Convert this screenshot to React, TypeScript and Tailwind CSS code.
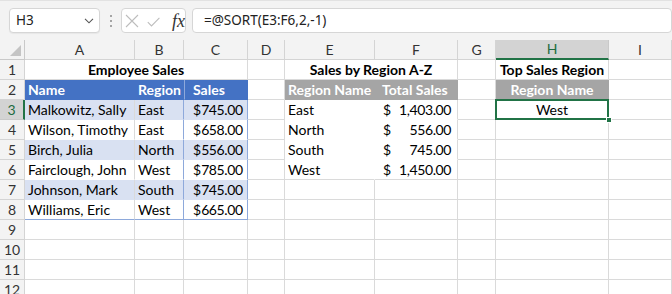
import type { ReactNode } from 'react'

const cols = ['A', 'B', 'C', 'D', 'E', 'F', 'G', 'H', 'I']

type Cell = {
  span?: number
  text?: ReactNode
  cls?: string
}

const grid = 'border-r border-b border-[#dadada]'
const blueHead = 'bg-[#4472c4] text-white font-bold border-r border-b border-[#4472c4] pl-[3px]'
const grayHead = 'bg-[#a5a5a5] text-white font-bold border-r border-b border-[#a5a5a5]'

const money = (v: string) => (
  <span className="flex w-full justify-between">
    <span>$</span>
    <span className="tracking-[-0.4px]">{v}</span>
  </span>
)

const employees = [
  ['Malkowitz, Sally', 'East', '745.00'],
  ['Wilson, Timothy', 'East', '658.00'],
  ['Birch, Julia', 'North', '556.00'],
  ['Fairclough, John', 'West', '785.00'],
  ['Johnson, Mark', 'South', '745.00'],
  ['Williams, Eric', 'West', '665.00'],
]

const regions = [
  ['East', '1,403.00'],
  ['North', '556.00'],
  ['South', '745.00'],
  ['West', '1,450.00'],
]

// builds the cells for one row, columns A..I
const rowCells = (r: number): Cell[] => {
  const cells: Cell[] = []
  // A..C
  if (r === 1) {
    cells.push({ span: 3, text: 'Employee Sales', cls: `${grid} font-bold justify-center` })
  } else if (r === 2) {
    cells.push({ text: 'Name', cls: blueHead })
    cells.push({ text: 'Region', cls: `${blueHead} pl-[2px]` })
    cells.push({ text: 'Sales', cls: `${blueHead} pl-[8px] border-l border-l-[#8ea9db]` })
  } else if (r >= 3 && r <= 8) {
    const e = employees[r - 3]
    const band = r % 2 === 1 ? 'bg-[#d9e1f2]' : 'bg-white'
    const bottom = r === 8 ? 'border-b-[#8ea9db]' : r % 2 === 1 ? 'border-b-[#d9e1f2]' : 'border-b-white'
    cells.push({ text: e[0], cls: `${band} border-r border-b border-r-[#dadada] ${bottom} pl-[3px]` })
    cells.push({ text: e[1], cls: `${band} border-r border-b border-r-[#8ea9db] ${bottom} pl-[3px]` })
    cells.push({ text: money(e[2]), cls: `${band} border-r border-b border-r-[#8ea9db] ${bottom} pl-[9px] pr-[7px]` })
  } else {
    cells.push({ cls: grid }, { cls: grid }, { cls: grid })
  }
  // D
  cells.push({ cls: grid })
  // E..F
  if (r === 1) {
    cells.push({ span: 2, text: 'Sales by Region A-Z', cls: `${grid} font-bold justify-center` })
  } else if (r === 2) {
    cells.push({ text: 'Region Name', cls: `${grayHead} pl-[3px]` })
    cells.push({ text: 'Total Sales', cls: `${grayHead} pl-[7px]` })
  } else if (r >= 3 && r <= 6) {
    const g = regions[r - 3]
    const bottom = r === 6 ? 'border-b-[#dadada]' : 'border-b-white'
    cells.push({ text: g[0], cls: `border-r border-b border-r-white ${bottom} pl-[3px]` })
    cells.push({ text: money(g[1]), cls: `border-r border-b border-r-[#dadada] ${bottom} pl-[8px] pr-[6px]` })
  } else {
    cells.push({ cls: grid }, { cls: grid })
  }
  // G
  cells.push({ cls: grid })
  // H
  if (r === 1) {
    cells.push({ text: 'Top Sales Region', cls: `${grid} font-bold justify-center` })
  } else if (r === 2) {
    cells.push({ text: 'Region Name', cls: `${grayHead} justify-center` })
  } else if (r === 3) {
    cells.push({ text: 'West', cls: `${grid} justify-center relative` })
  } else {
    cells.push({ cls: grid })
  }
  // I
  cells.push({ cls: grid })
  return cells
}

const NameBox = () => (
  <div className="flex h-[25px] w-[100px] items-center justify-between rounded-[4px] border border-[#d6d6d6] bg-white pl-[6px] pr-[5px] shadow-[0_1px_1px_rgba(0,0,0,0.05)]">
    <span className="font-['Noto_Sans',sans-serif] text-[13.5px] text-[#222]">H3</span>
    <svg width="10" height="6" viewBox="0 0 10 6" fill="none">
      <path d="M1 0.8 L5 4.8 L9 0.8" stroke="#555" strokeWidth="1.1" />
    </svg>
  </div>
)

const FormulaButtons = () => (
  <div className="flex h-[25px] w-[72px] items-center rounded-[4px] border border-[#d6d6d6] bg-white pl-[3px]">
    <svg width="14" height="14" viewBox="0 0 14 14" fill="none">
      <path d="M1 1 L13 13 M13 1 L1 13" stroke="#bdbdbd" strokeWidth="1.1" />
    </svg>
    <svg className="ml-[8px] mt-[3px]" width="13" height="10" viewBox="0 0 13 10" fill="none">
      <path d="M0.8 5.2 L4.5 9 L12.4 0.8" stroke="#bdbdbd" strokeWidth="1.1" />
    </svg>
    <span className="ml-[12px] font-['Liberation_Serif',serif] text-[18px] italic leading-none text-[#333]">fx</span>
  </div>
)

const App = () => {
  const rows = Array.from({ length: 12 }, (_, i) => i + 1)

  return (
    <div className="h-[294px] w-[672px] overflow-hidden bg-white font-['Lato',sans-serif] text-[14px] text-black">
      {/* formula bar */}
      <div className="flex h-[40px] items-start border-t border-[#e2e2e2] bg-[#f3f3f3] pl-[9px] pt-[7px]">
        <NameBox />
        <div className="ml-[10px] mr-[9px] flex h-[25px] flex-col items-center justify-center gap-[3px]">
          <span className="h-[2px] w-[2px] rounded-full bg-[#8a8a8a]" />
          <span className="h-[2px] w-[2px] rounded-full bg-[#8a8a8a]" />
          <span className="h-[2px] w-[2px] rounded-full bg-[#8a8a8a]" />
        </div>
        <FormulaButtons />
        <div className="ml-[6px] flex h-[25px] w-[480px] shrink-0 items-center rounded-[4px] border border-[#d6d6d6] bg-white pl-[11px]">
          <span className="font-['Noto_Sans',sans-serif] text-[13.5px] text-[#222]">=@SORT(E3:F6,2,-1)</span>
        </div>
      </div>

      {/* sheet */}
      <div className="grid grid-cols-[25px_110px_49px_64px_37px_90px_83px_38px_113px_63px] auto-rows-[20px] leading-none">
        {/* corner */}
        <div className="relative border-r border-b border-[#c9c9c9] bg-[#f3f3f3]">
          <svg className="absolute bottom-[3px] right-[3px]" width="11" height="11" viewBox="0 0 11 11">
            <path d="M11 0 L11 11 L0 11 Z" fill="#c4c4c4" />
          </svg>
        </div>
        {cols.map((c) => (
          <div
            key={c}
            className={
              c === 'H'
                ? 'flex items-center justify-center border-r border-b-2 border-r-[#c9c9c9] border-b-[#217346] bg-[#d3d3d3] text-[#1e6b40]'
                : 'flex items-center justify-center border-r border-b border-[#d4d4d4] bg-[#f3f3f3] text-[#333]'
            }
          >
            {c}
          </div>
        ))}

        {rows.map((r) => (
          <div key={r} className="contents">
            <div
              className={
                r === 3
                  ? 'flex items-center justify-center border-r-2 border-b border-r-[#217346] border-b-[#c9c9c9] bg-[#d3d3d3] text-[#1e6b40]'
                  : 'flex items-center justify-center border-r border-b border-[#d4d4d4] bg-[#f3f3f3] text-[#333]'
              }
            >
              {r}
            </div>
            {rowCells(r).map((cell, i) => (
              <div
                key={i}
                className={`flex items-center overflow-visible whitespace-nowrap ${cell.span === 3 ? 'col-span-3' : cell.span === 2 ? 'col-span-2' : ''} ${cell.cls ?? ''}`}
              >
                {cell.text}
                {r === 3 && i === 7 && (
                  <>
                    <div className="pointer-events-none absolute -left-[1px] -top-[1px] bottom-[-1px] right-[-1px] border-2 border-[#217346]" />
                    <div className="absolute -bottom-[4px] -right-[4px] h-[6px] w-[6px] border border-white bg-[#217346]" />
                  </>
                )}
              </div>
            ))}
          </div>
        ))}
      </div>
    </div>
  )
}

export default App
